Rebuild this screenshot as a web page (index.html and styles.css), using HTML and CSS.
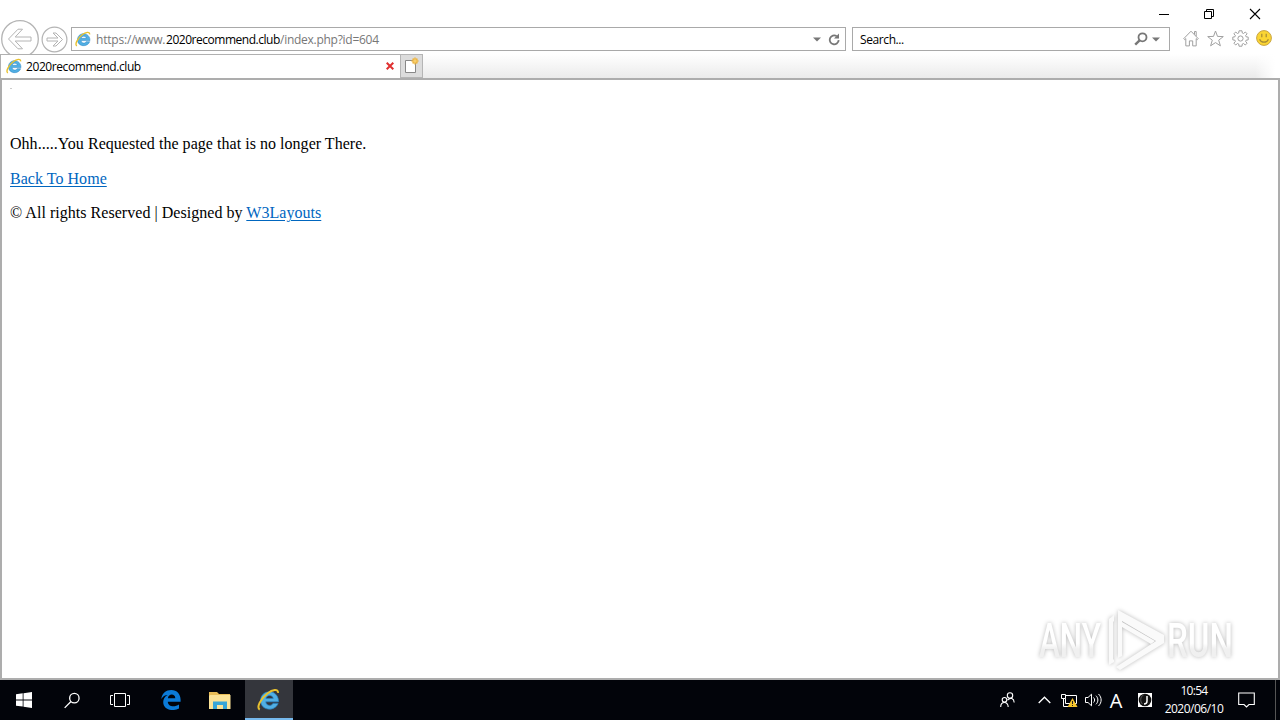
FILE: index.html
```html
<!DOCTYPE html>
<html lang="en">
<head>
    <meta charset="UTF-8">
    <title>2020recommend.club</title>
    <link rel="stylesheet" href="styles.css">
</head>
<body>

    <!-- Shared icon -->
    <svg class="defs" width="0" height="0">
        <symbol id="ie" viewBox="0 0 16 16">
            <path class="ie-letter" d="M15 9.600H6.100c.2 3 4 3.200 5 1.100h3.600C12.500 16.600 2.500 16 2.500 8.700c0-8 12.500-8.400 12.500.9zM6.200 7.300h5.100c-.3-2.800-4.700-2.800-5.100 0z" stroke-width=".5"/>
            <path class="ie-ring" d="M1.900 15C-.6 13.500 2.600 7.300 7.200 3.800 10.800 1 14.800.2 14.600 3.400" fill="none" stroke-width="1.400"/>
        </symbol>
        <linearGradient id="markFill" x1="0" y1="0" x2="0" y2="1">
            <stop offset=".55" stop-color="#fff"/>
            <stop offset=".65" stop-color="#f0f0f0"/>
        </linearGradient>
    </svg>

    <div class="browser">
        <!-- Window buttons -->
        <div class="titlebar">
            <svg width="45" height="27"><path d="M18 14.5h10" stroke="#000"/></svg>
            <svg width="46" height="27"><path d="M18.5 11.5h7v7h-7zM20.5 11.5v-2h7v7h-2" fill="none" stroke="#000"/></svg>
            <svg width="46" height="27"><path d="M18 9l10 10M28 9L18 19" stroke="#000" stroke-width="1.1"/></svg>
        </div>

        <!-- Address and search -->
        <div class="navbar">
            <svg class="back" width="40" height="40" viewBox="0 0 40 40" fill="none" stroke="#b4b4b4">
                <circle cx="20" cy="20" r="18.3" stroke-width="1.3"/>
                <path d="M8.5 20L18 10.2h4.5L15.2 18H31v4H15.2l7.3 7.8H18z"/>
            </svg>
            <svg class="forward" width="27" height="27" viewBox="0 0 27 27" fill="none" stroke="#b4b4b4">
                <circle cx="13.5" cy="13.5" r="12.4" stroke-width="1.2"/>
                <path d="M21.5 13.5L15 7h-3l5 5H6v3h11l-5 5h3z"/>
            </svg>
            <div class="address">
                <svg width="16" height="16"><use href="#ie"/></svg>
                <div class="url"><span class="scheme">https://</span><span class="www">www.</span><span class="domain">2020recommend.club</span><span class="path">/index.php?id=604</span></div>
                <svg width="8" height="5"><path d="M0 .5h8l-4 4z" fill="#777"/></svg>
                <svg class="reload" width="13" height="13" viewBox="0 0 13 13">
                    <path d="M10.7 7.2A4.5 4.5 0 1 1 8.6 3" fill="none" stroke="#777" stroke-width="1.8"/>
                    <path d="M11 .5v5H6z" fill="#777"/>
                </svg>
            </div>
            <div class="search">
                <span>Search...</span>
                <svg width="14" height="14" viewBox="0 0 14 14" fill="none" stroke="#777">
                    <circle cx="8.5" cy="5.3" r="4" stroke-width="1.8"/>
                    <path d="M5.6 8.3L1.2 12.7" stroke-width="2.4"/>
                </svg>
                <svg class="arrow" width="8" height="5"><path d="M0 .5h8l-4 4z" fill="#777"/></svg>
            </div>
            <div class="tools">
                <svg width="16" height="17" viewBox="0 0 16 17" fill="none" stroke="#a0a0a0">
                    <path d="M.7 8.7L8 1.2l7.3 7.5-1 .9-1.1-1v7.3H9.7v-5H6.4v5H2.8V8.6l-1.1 1zM11.5 4.5v-3h1.7v4.8"/>
                </svg>
                <svg width="17" height="17" viewBox="0 0 17 17" fill="none" stroke="#a0a0a0">
                    <path d="M8.5 1l2 5.4 5.8.2-4.6 3.6 1.7 5.6-4.9-3.2-4.9 3.2 1.7-5.6L.7 6.6l5.8-.2z"/>
                </svg>
                <svg width="17" height="17" viewBox="-8.5 -8.5 17 17" fill="none" stroke="#a0a0a0">
                    <path d="M-1.500-7.700h3l.3 2.200 1.200.5 1.800-1.500L6.600-4.700 5.100-2.900l.5 1.200 2.100.3v2.800l-2.100.3-.5 1.200L6.600 4.700 4.800 6.500 3 5l-1.200.5-.3 2.200h-3l-.3-2.200L-3 5l-1.800 1.500L-6.600 4.700-5.100 2.900l-.5-1.200-2.100-.3v-2.800l2.100-.3.5-1.200-1.500-1.800L-4.800-6.500-3-5l1.200-.5z"/>
                    <circle cx="0" cy="0" r="2.600"/>
                </svg>
                <svg class="smiley" width="16" height="16" viewBox="0 0 16 16">
                    <circle cx="8" cy="8" r="7.4" fill="#fbd533" stroke="#c9a544"/>
                    <path d="M5.8 3.7v3.5M10.2 3.7v3.5M3.6 9.2c1.6 4 7.2 4 8.8 0" fill="none" stroke="#a58a35" stroke-width="1.2"/>
                </svg>
            </div>
        </div>

        <!-- Tabs -->
        <div class="tabs">
            <div class="tab">
                <svg width="16" height="16"><use href="#ie"/></svg>
                <span>2020recommend.club</span>
                <svg class="close" width="8" height="8"><path d="M.7.7l6.6 6.6M7.3.7L.7 7.3" stroke="#e03030" stroke-width="2"/></svg>
            </div>
            <div class="new-tab">
                <svg width="16" height="17" viewBox="0 0 16 17">
                    <path d="M1.5 3.5h10v12h-10z" fill="#fff" stroke="#888"/>
                    <path d="M11 .5v7M7.5 4h7M8.6 1.6l4.8 4.8M13.4 1.6L8.6 6.4" stroke="#edb33e" stroke-width="1.5"/>
                    <circle cx="11" cy="4" r="1.7" fill="#f7cf6d"/>
                </svg>
            </div>
        </div>

        <!-- Page content -->
        <div class="page">
            <div class="dot"></div>
            <p>Ohh.....You Requested the page that is no longer There.</p>
            <p><a href="#">Back To Home</a></p>
            <p>© All rights Reserved | Designed by <a href="#">W3Layouts</a></p>

            <svg class="watermark" width="212" height="70" viewBox="0 0 212 70">
                <g class="mark-text">
                    <text x="8" y="52" textLength="62" lengthAdjust="spacingAndGlyphs">ANY</text>
                    <text x="136" y="52" textLength="66" lengthAdjust="spacingAndGlyphs">RUN</text>
                </g>
                <g class="mark-logo">
                    <path d="M87 5l46 25v8L89 65l-4-3 40-26L91 16v35l-4 2z"/>
                    <path d="M83 10l-5 4v46l5-3v-3l-1 1V17l1-1z"/>
                    <path d="M91 17l33 19-4 3-29-17z"/>
                </g>
            </svg>
        </div>
    </div>

    <div class="taskbar">
        <div class="task">
            <svg width="16" height="16" viewBox="0 0 16 16" fill="#fff">
                <path d="M0 2.2L6.7 1.3v6.2H0zM7.5 1.2L16 0v7.5H7.5zM0 8.4h6.7v6.2L0 13.7zM7.5 8.4H16V16l-8.5-1.2z"/>
            </svg>
        </div>
        <div class="task">
            <svg width="16" height="17" viewBox="0 0 17 17" fill="none" stroke="#fff" stroke-width="1.4">
                <circle cx="11" cy="6" r="5"/><path d="M7.4 9.6L.7 16.3"/>
            </svg>
        </div>
        <div class="task">
            <svg width="20" height="14" viewBox="0 0 20 14" fill="none" stroke="#fff">
                <path d="M4.5.5h11v13h-11zM3 2.5H.5v9H3M17 2.5h2.5v9H17"/>
            </svg>
        </div>
        <div class="task edge">
            <svg width="20" height="20" viewBox="0 0 20 20">
                <path d="M.2 9C1.2 3 5 0 10.3 0 16 0 19.6 4.2 19.6 9.8v2H6.8c.2 5.3 7 5.6 11.2 2.8v3.9c-6 3.2-15.8 1.7-15.8-6.4 0-3 1.5-5.8 4.5-7.2C4 4.9 1.700 6.500.2 9zm6.700-.8h7.400c0-4.700-6.800-5-7.400 0z" fill="#0b7bd8"/>
            </svg>
        </div>
        <div class="task explorer">
            <svg width="22" height="19" viewBox="0 0 22 19">
                <path d="M0 1h8l2 2h11v15H0z" fill="#e9bd57"/>
                <path d="M1 4h20.500v14H0V5z" fill="#fce397"/>
                <path d="M4 10.500h14V18h-4v-4H8v4H4z" fill="#38a6d8"/>
            </svg>
        </div>
        <div class="task active">
            <svg width="23" height="23"><use href="#ie"/></svg>
        </div>

        <!-- Tray -->
        <div class="tray">
            <svg class="people" width="15" height="16" viewBox="0 0 15 16" fill="none" stroke="#fff" stroke-width="1.1">
                <circle cx="10" cy="3.500" r="2.700"/><circle cx="4.500" cy="7.800" r="2.300"/>
                <path d="M.700 15c0-6 7.500-6 7.500 0M7.500 8.200c3-3.500 6.500-1.500 6.700 2.300"/>
            </svg>
            <svg class="chevron" width="13" height="8"><path d="M.7 7L6.500 1.200 12.300 7" fill="none" stroke="#fff" stroke-width="1.300"/></svg>
            <svg class="network" width="17" height="15" viewBox="0 0 17 15" fill="none" stroke="#fff">
                <path d="M.5 1.500h4v4h-4zM2.500 5.500v8M5 2.500h10.500v8H4.500v-5M2.500 13.500H9"/>
                <path d="M11.500 5L16.500 14h-10z" fill="#f5c52b" stroke="none"/>
                <path d="M11.500 8v3M11.500 12v1" stroke="#222"/>
            </svg>
            <svg class="volume" width="17" height="14" viewBox="0 0 17 14" fill="none" stroke="#fff">
                <path d="M.5 4.500H3l3.500-3.300v11.600L3 9.500H.5zM8.500 4.500c1.500 1.500 1.500 3.500 0 5M11 2.700c2.500 2.500 2.500 6.100 0 8.600M13.500 1c3.500 3.500 3.500 8.500 0 12"/>
            </svg>
            <span class="lang">A</span>
            <svg class="ime" width="14" height="14" viewBox="0 0 14 14">
                <path d="M0 0h14v14H0z" fill="#fff"/>
                <circle cx="7" cy="7" r="6.300" fill="#111"/>
                <path d="M9 3v5c0 2-1 3-3 3" fill="none" stroke="#fff" stroke-width="1.500"/>
                <path d="M5.500 2C2 3.500 2 9 4.500 11" fill="none" stroke="#555"/>
            </svg>
            <div class="clock">
                <div class="time">10:54</div>
                <div class="date">2020/06/10</div>
            </div>
            <svg class="notice" width="17" height="17" viewBox="0 0 17 17" fill="none" stroke="#fff" stroke-width="1.100">
                <path d="M.7 1h15.600v11.500H11L8.500 15 6 12.500H.7z"/>
            </svg>
            <div class="show-desktop"></div>
        </div>
    </div>

</body>
</html>
```
FILE: styles.css
```css
* {
    box-sizing: border-box;
}

body {
    margin: 0;
    width: 1280px;
    height: 720px;
    overflow: hidden;
    background: #fff;
    font-family: "Open Sans", "Noto Sans", sans-serif;
    font-size: 12px;
    color: #000;
}

svg {
    display: block;
    flex: none;
}

.defs {
    position: absolute;
}

.ie-letter {
    fill: #51afe3;
    stroke: #2783c4;
}

.ie-ring {
    stroke: #e8c12f;
}

.browser {
    height: 680px;
    display: flex;
    flex-direction: column;
}

/* Window chrome */
.titlebar {
    height: 27px;
    display: flex;
    justify-content: flex-end;
    padding-right: 2px;
}

.navbar {
    height: 27px;
    display: flex;
    align-items: flex-start;
}

.back {
    margin-top: -8px;
}

.forward {
    margin: -1px 1px 0 1px;
}

.address,
.search {
    height: 24px;
    border: 1px solid #a9a9a9;
    display: flex;
    align-items: center;
    white-space: nowrap;
}

.address {
    width: 775px;
    margin-left: 2px;
    padding: 0 4px 0 4px;
}

.address > svg:first-child {
    margin-left: -1px;
}

.url {
    flex: 1;
    display: flex;
    padding-left: 5px;
    color: #777;
}

.scheme {
    width: 39px;
    letter-spacing: -0.2px;
}

.www {
    width: 31px;
    letter-spacing: -0.2px;
}

.domain {
    width: 114px;
    color: #000;
    letter-spacing: -0.47px;
}

.path {
    letter-spacing: -0.27px;
}

.reload {
    margin-left: 7px;
}

.search {
    width: 318px;
    margin-left: 6px;
    padding: 0 9px 0 7px;
}

.search span {
    flex: 1;
    letter-spacing: -0.4px;
}

.arrow {
    margin-left: 4px;
}

.tools {
    display: flex;
    gap: 8px;
    margin: 3px 0 0 13px;
}

.smiley {
    margin-left: -1px;
}

/* Tabs */
.tabs {
    height: 24px;
    display: flex;
    background: linear-gradient(to right, rgba(255, 255, 255, 0) 1255px, #fff 1275px),
        linear-gradient(#fff, #ebebeb);
    z-index: 1;
}

.tab {
    width: 400px;
    display: flex;
    align-items: center;
    padding: 0 6px 1px 5px;
    background: #fff;
    border: 1px solid #b0b0b0;
    border-width: 1px 0 0 1px;
}

.tab span {
    flex: 1;
    padding-left: 4px;
    letter-spacing: -0.42px;
}

.new-tab {
    width: 23px;
    padding: 2px 0 0 3px;
    background: #dcdcdc;
    border: 1px solid #b5b5b5;
}

/* Page */
.page {
    position: relative;
    flex: 1;
    padding: 8px;
    border: 2px solid #adadad;
    font-family: "Liberation Serif", serif;
    font-size: 16px;
    line-height: 18px;
    letter-spacing: 0.035px;
}

.page p {
    margin: 0 0 16.5px;
}

.page a {
    color: #0066bf;
    text-underline-offset: 2px;
}

.dot {
    width: 2px;
    height: 1px;
    margin-bottom: 46px;
    background: #ccc;
}

.watermark {
    position: absolute;
    right: 35px;
    bottom: 3px;
    overflow: visible;
    filter: drop-shadow(0 0 2px rgba(0, 0, 0, 0.28));
}

.mark-text {
    fill: url(#markFill);
    font: 500 48px Roboto, "Liberation Sans", sans-serif;
}

.mark-logo {
    fill: #fafafa;
}

/* Taskbar */
.taskbar {
    height: 40px;
    display: flex;
    background: #02040a;
    color: #fff;
}

.task {
    width: 48px;
    display: flex;
    align-items: center;
    justify-content: center;
}

.edge {
    width: 54px;
}

.explorer {
    width: 47px;
    padding-right: 3px;
}

.active {
    background: #34363c;
    border-bottom: 2px solid #76b9ed;
    padding-right: 1px;
}

.tray {
    flex: 1;
    display: flex;
    align-items: center;
    justify-content: flex-end;
}

.chevron {
    margin-left: 23px;
}

.network {
    margin-left: 10px;
}

.volume {
    margin-left: 7px;
}

.lang {
    width: 14px;
    margin-left: 7px;
    text-align: center;
    font-size: 20px;
}

.ime {
    margin-left: 15px;
}

.clock {
    width: 60px;
    margin-left: 12px;
    text-align: center;
    line-height: 18px;
}

.time {
    letter-spacing: -0.7px;
}

.date {
    letter-spacing: -0.5px;
}

.notice {
    margin-left: 14px;
}

.show-desktop {
    width: 5px;
    height: 40px;
    margin-left: 20px;
    border-left: 1px solid #555;
}
```
